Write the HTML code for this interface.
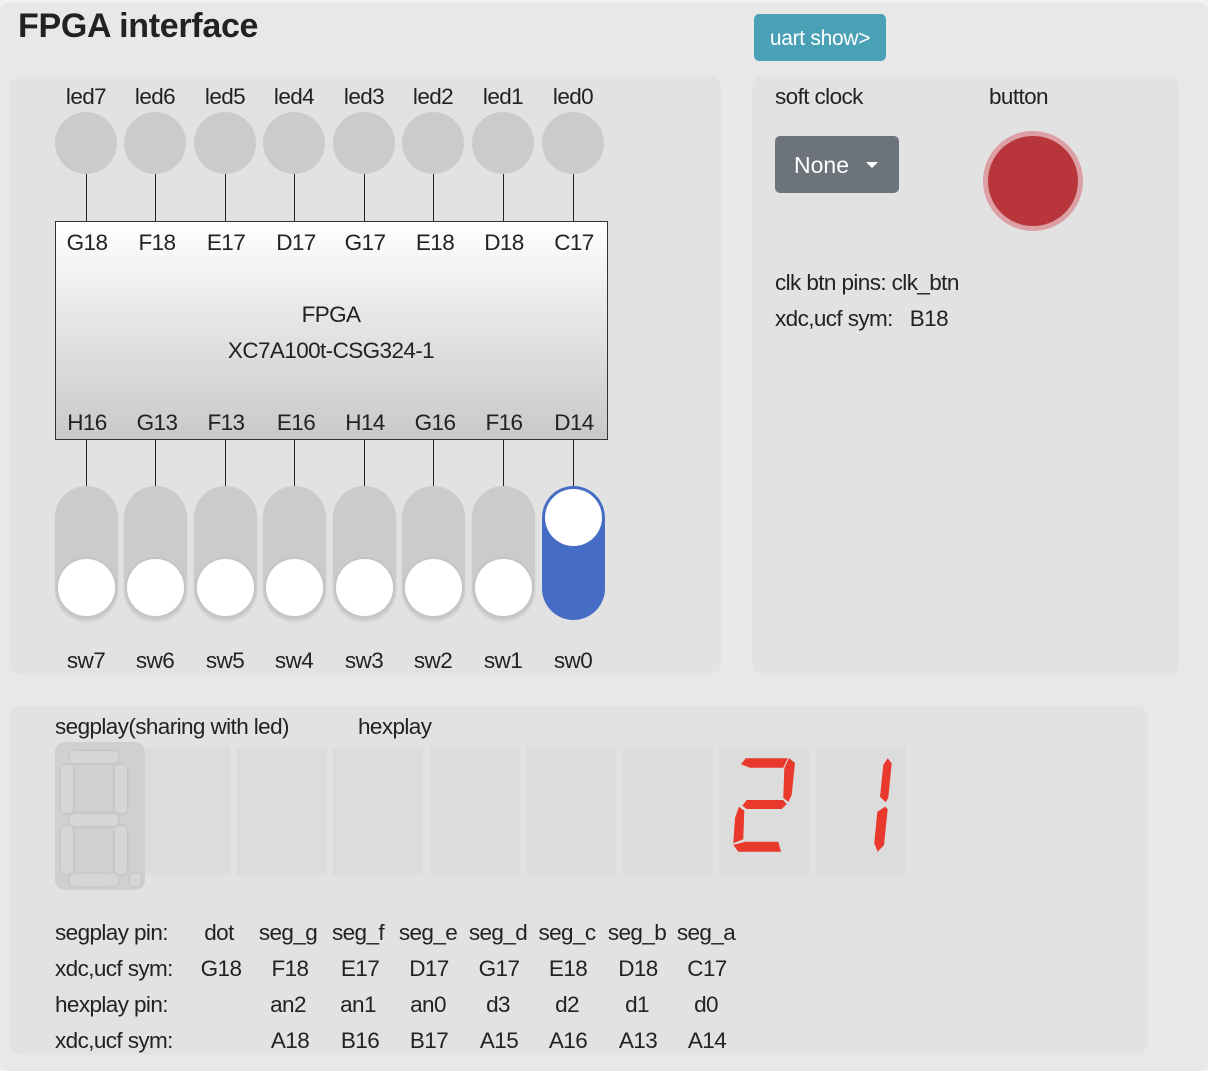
<!DOCTYPE html>
<html><head><meta charset="utf-8"><style>
*{margin:0;padding:0;box-sizing:border-box}
body{width:1208px;height:1071px;background:#f2f2f2;font-family:"Liberation Sans",sans-serif;color:#222;position:relative;overflow:hidden}
.a{position:absolute}
.wrap{left:0;top:3px;width:1208px;height:1068px;background:#e8e8e8;border-radius:8px}
.panel{background:#e2e2e2;border-radius:12px}
.t{position:absolute;font-size:22.5px;line-height:24px;text-align:center;width:90px;letter-spacing:-0.6px;margin-top:1px;margin-left:-5px}
.tl{position:absolute;font-size:22.5px;line-height:24px;white-space:nowrap;letter-spacing:-0.6px;margin-top:1px}
.led{position:absolute;width:62px;height:62px;border-radius:50%;background:#cbcbcb}
.ln{position:absolute;width:1px;background:#222}
.sw{position:absolute;width:63px;height:134px;border-radius:32px;background:#cbcbcb;box-shadow:0 2px 2px rgba(0,0,0,.08)}
.kn{position:absolute;left:3px;width:57px;height:57px;border-radius:50%;background:#fff;box-shadow:0 0 0 2px #c4c4c4}
.box{position:absolute;top:747px;width:90px;height:128px;background:#dcdcdc}
.sg{position:absolute;background:#d6d6d6;border-radius:4px;box-shadow:0 0 3px rgba(0,0,0,.12)}
</style></head><body>
<div class="a wrap"></div>
<div class="a" style="left:18px;top:6px;font-size:34px;font-weight:bold;line-height:40px;color:#222;letter-spacing:-0.3px">FPGA interface</div>
<div class="a" style="left:754px;top:14px;width:132px;height:47px;background:#4aa1b5;border-radius:5px;color:#fff;font-size:21px;line-height:49px;text-align:center;letter-spacing:-0.3px">uart show&gt;</div>

<div class="a panel" style="left:10px;top:76px;width:711px;height:599px"></div>
<div class="a panel" style="left:752px;top:76px;width:427px;height:599px"></div>
<div class="a panel" style="left:10px;top:706px;width:1138px;height:349px"></div>

<div class="t" style="left:46px;top:84px">led7</div><div class="t" style="left:115px;top:84px">led6</div><div class="t" style="left:185px;top:84px">led5</div><div class="t" style="left:254px;top:84px">led4</div><div class="t" style="left:324px;top:84px">led3</div><div class="t" style="left:393px;top:84px">led2</div><div class="t" style="left:463px;top:84px">led1</div><div class="t" style="left:533px;top:84px">led0</div>
<div class="led" style="left:55px;top:112px"></div><div class="led" style="left:124px;top:112px"></div><div class="led" style="left:194px;top:112px"></div><div class="led" style="left:263px;top:112px"></div><div class="led" style="left:333px;top:112px"></div><div class="led" style="left:402px;top:112px"></div><div class="led" style="left:472px;top:112px"></div><div class="led" style="left:542px;top:112px"></div>
<div class="ln" style="left:86px;top:174px;height:47px"></div><div class="ln" style="left:155px;top:174px;height:47px"></div><div class="ln" style="left:225px;top:174px;height:47px"></div><div class="ln" style="left:294px;top:174px;height:47px"></div><div class="ln" style="left:364px;top:174px;height:47px"></div><div class="ln" style="left:433px;top:174px;height:47px"></div><div class="ln" style="left:503px;top:174px;height:47px"></div><div class="ln" style="left:573px;top:174px;height:47px"></div>

<div class="a" style="left:55px;top:221px;width:553px;height:219px;border:1.5px solid #333;background:linear-gradient(#ffffff,#e6e6e6 45%,#c9c9c9)"></div>
<div class="t" style="left:47px;top:230px">G18</div><div class="t" style="left:117px;top:230px">F18</div><div class="t" style="left:186px;top:230px">E17</div><div class="t" style="left:256px;top:230px">D17</div><div class="t" style="left:325px;top:230px">G17</div><div class="t" style="left:395px;top:230px">E18</div><div class="t" style="left:464px;top:230px">D18</div><div class="t" style="left:534px;top:230px">C17</div>
<div class="t" style="left:236px;top:302px;width:200px">FPGA</div>
<div class="t" style="left:186px;top:338px;width:300px">XC7A100t-CSG324-1</div>
<div class="t" style="left:47px;top:410px">H16</div><div class="t" style="left:117px;top:410px">G13</div><div class="t" style="left:186px;top:410px">F13</div><div class="t" style="left:256px;top:410px">E16</div><div class="t" style="left:325px;top:410px">H14</div><div class="t" style="left:395px;top:410px">G16</div><div class="t" style="left:464px;top:410px">F16</div><div class="t" style="left:534px;top:410px">D14</div>
<div class="ln" style="left:86px;top:440px;height:46px"></div><div class="ln" style="left:155px;top:440px;height:46px"></div><div class="ln" style="left:225px;top:440px;height:46px"></div><div class="ln" style="left:294px;top:440px;height:46px"></div><div class="ln" style="left:364px;top:440px;height:46px"></div><div class="ln" style="left:433px;top:440px;height:46px"></div><div class="ln" style="left:503px;top:440px;height:46px"></div><div class="ln" style="left:573px;top:440px;height:46px"></div>

<div class="sw" style="left:55px;top:486px"><div class="kn" style="top:73px"></div></div>
<div class="sw" style="left:124px;top:486px"><div class="kn" style="top:73px"></div></div>
<div class="sw" style="left:194px;top:486px"><div class="kn" style="top:73px"></div></div>
<div class="sw" style="left:263px;top:486px"><div class="kn" style="top:73px"></div></div>
<div class="sw" style="left:333px;top:486px"><div class="kn" style="top:73px"></div></div>
<div class="sw" style="left:402px;top:486px"><div class="kn" style="top:73px"></div></div>
<div class="sw" style="left:472px;top:486px"><div class="kn" style="top:73px"></div></div>
<div class="sw" style="left:542px;top:486px;background:#456dc6;box-shadow:none"><div class="kn" style="top:3px;box-shadow:none"></div></div>
<div class="t" style="left:46px;top:648px">sw7</div><div class="t" style="left:115px;top:648px">sw6</div><div class="t" style="left:185px;top:648px">sw5</div><div class="t" style="left:254px;top:648px">sw4</div><div class="t" style="left:324px;top:648px">sw3</div><div class="t" style="left:393px;top:648px">sw2</div><div class="t" style="left:463px;top:648px">sw1</div><div class="t" style="left:533px;top:648px">sw0</div>

<div class="tl" style="left:775px;top:84px">soft clock</div>
<div class="tl" style="left:989px;top:84px">button</div>
<div class="a" style="left:775px;top:136px;width:124px;height:57px;background:#6c737b;border-radius:5px;color:#fff;font-size:23px;line-height:59px;padding-left:19px">None<span style="position:absolute;left:91px;top:26px;width:0;height:0;border-left:6px solid transparent;border-right:6px solid transparent;border-top:6px solid #fff"></span></div>
<div class="a" style="left:983px;top:131px;width:100px;height:100px;border-radius:50%;background:#b8353b;border:5px solid #dc9fa3"></div>
<div class="tl" style="left:775px;top:270px">clk btn pins: clk_btn</div>
<div class="tl" style="left:775px;top:306px">xdc,ucf sym:&nbsp;&nbsp; B18</div>

<div class="tl" style="left:55px;top:714px">segplay(sharing with led)</div>
<div class="tl" style="left:358px;top:714px">hexplay</div>
<div class="a" style="left:55px;top:742px;width:90px;height:148px;background:#d0d0d0;border-radius:10px"></div>
<div class="sg" style="left:70px;top:751px;width:48px;height:12px"></div>
<div class="sg" style="left:61px;top:765px;width:12px;height:48px"></div>
<div class="sg" style="left:115px;top:765px;width:12px;height:48px"></div>
<div class="sg" style="left:70px;top:814px;width:48px;height:12px"></div>
<div class="sg" style="left:61px;top:826px;width:12px;height:48px"></div>
<div class="sg" style="left:115px;top:826px;width:12px;height:48px"></div>
<div class="sg" style="left:70px;top:874px;width:48px;height:12px"></div>
<div class="sg" style="left:130px;top:874px;width:11px;height:12px;border-radius:2px"></div>
<div class="box" style="left:145px;width:85px"></div>
<div class="box" style="left:237px"></div>
<div class="box" style="left:333px"></div>
<div class="box" style="left:430px"></div>
<div class="box" style="left:526px"></div>
<div class="box" style="left:623px"></div>
<div class="box" style="left:719px"></div>
<div class="box" style="left:816px"></div>
<svg class="a" style="left:0;top:0" width="1208" height="1071" viewBox="0 0 1208 1071">
<g fill="#e8392c">
<polygon points="745.7,758.3 787.7,758.3 783.3,767.7 750,767.7 741,764.3"/>
<polygon points="789,758 795,763 791.7,795 788.3,802 783.3,797.7 784.3,768.3"/>
<polygon points="746.7,800 783.3,800 786.7,804.3 781.7,809 746.7,809 742.3,805.7"/>
<polygon points="739,806.7 744.3,810.7 743.3,839.3 733.3,843.3 735,818"/>
<polygon points="733.3,845 745,841.7 778.3,841.7 781,851.7 738.3,851.7"/>
<polygon points="887.7,758.3 891.7,763.3 888.3,797.7 885.7,802.3 880,796.7 883.3,765"/>
<polygon points="885,806.7 887.7,809 884,845 877.7,851.7 874.3,843.3 877.3,811.7"/>
</g></svg>

<div class="tl" style="left:55px;top:920px">segplay pin:</div>
<div class="tl" style="left:55px;top:956px">xdc,ucf sym:</div>
<div class="tl" style="left:55px;top:992px">hexplay pin:</div>
<div class="tl" style="left:55px;top:1028px">xdc,ucf sym:</div>
<div class="t" style="left:179px;top:920px">dot</div><div class="t" style="left:248px;top:920px">seg_g</div><div class="t" style="left:318px;top:920px">seg_f</div><div class="t" style="left:388px;top:920px">seg_e</div><div class="t" style="left:458px;top:920px">seg_d</div><div class="t" style="left:527px;top:920px">seg_c</div><div class="t" style="left:597px;top:920px">seg_b</div><div class="t" style="left:666px;top:920px">seg_a</div>
<div class="t" style="left:181px;top:956px">G18</div><div class="t" style="left:250px;top:956px">F18</div><div class="t" style="left:320px;top:956px">E17</div><div class="t" style="left:389px;top:956px">D17</div><div class="t" style="left:459px;top:956px">G17</div><div class="t" style="left:528px;top:956px">E18</div><div class="t" style="left:598px;top:956px">D18</div><div class="t" style="left:667px;top:956px">C17</div>
<div class="t" style="left:248px;top:992px">an2</div><div class="t" style="left:318px;top:992px">an1</div><div class="t" style="left:388px;top:992px">an0</div><div class="t" style="left:458px;top:992px">d3</div><div class="t" style="left:527px;top:992px">d2</div><div class="t" style="left:597px;top:992px">d1</div><div class="t" style="left:666px;top:992px">d0</div>
<div class="t" style="left:250px;top:1028px">A18</div><div class="t" style="left:320px;top:1028px">B16</div><div class="t" style="left:389px;top:1028px">B17</div><div class="t" style="left:459px;top:1028px">A15</div><div class="t" style="left:528px;top:1028px">A16</div><div class="t" style="left:598px;top:1028px">A13</div><div class="t" style="left:667px;top:1028px">A14</div>
</body></html>
